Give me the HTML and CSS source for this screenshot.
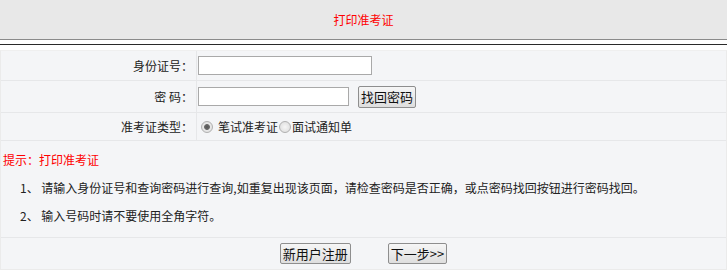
FILE: index.html
```html
<!DOCTYPE html>
<html lang="zh">
<head>
<meta charset="utf-8">
<title>打印准考证</title>
<link rel="stylesheet" href="styles.css">
</head>
<body>
<div class="header"><h1 class="title">打印准考证</h1></div>
<div class="rule"></div>
<div class="panel">
  <div class="row">
    <div class="label">身份证号：</div>
    <div class="field"><input class="txt txt-long" type="text"></div>
  </div>
  <div class="row row-pwd">
    <div class="label">密&nbsp;码：</div>
    <div class="field"><input class="txt txt-short" type="password"><button class="btn btn-find" type="button">找回密码</button></div>
  </div>
  <div class="row row-type">
    <div class="label">准考证类型：</div>
    <div class="field">
      <label class="opt"><input class="radio" type="radio" name="t" checked><span class="opt-text">笔试准考证</span></label><label class="opt opt-2"><input class="radio" type="radio" name="t"><span>面试通知单</span></label>
    </div>
  </div>
  <div class="tips">
    <p class="tip-head">提示：打印准考证</p>
    <p class="tip">1、&nbsp;请输入身份证号和查询密码进行查询,如重复出现该页面，请检查密码是否正确，或点密码找回按钮进行密码找回。</p>
    <p class="tip">2、&nbsp;输入号码时请不要使用全角字符。</p>
  </div>
  <div class="actions">
    <button class="btn" type="button">新用户注册</button>
    <button class="btn" type="button">下一步&gt;&gt;</button>
  </div>
</div>
</body>
</html>
```
FILE: styles.css
```css
html, body { margin: 0; padding: 0; background: #fff; }
body {
  font-family: "Microsoft YaHei", "Noto Sans CJK SC", "DejaVu Sans", sans-serif;
  font-size: 12px;
  color: #222;
  width: 727px;
}
.header {
  height: 39px;
  background: #e8e8e8;
  border-bottom: 1px solid #8a8a8a;
  display: flex;
  align-items: center;
  justify-content: center;
}
.title {
  margin: 0;
  font-size: 12px;
  font-weight: normal;
  color: #f00;
  line-height: 16px;
}
.rule {
  margin-top: 4px;
  height: 0;
  border-top: 1px solid #2a2a2a;
}
.panel {
  margin-top: 5px;
  background: #f4f5f7;
  border: 1px solid #ebebeb;
  border-top: 1px solid #efefef;
}
.row {
  display: grid;
  grid-template-columns: 196px 1fr;
  height: 29px;
  border-bottom: 1px solid #e6e7e9;
}
.row-pwd { height: 31px; }
.row-type { height: 27px; }
.label {
  display: flex;
  align-items: center;
  justify-content: flex-end;
  padding-right: 3px;
  border-right: 1px solid #e6e7e9;
}
.field {
  display: flex;
  align-items: center;
  padding-left: 1px;
}
.txt {
  box-sizing: border-box;
  height: 19px;
  border: 1px solid #a9a9a9;
  background: #fff;
  padding: 0 2px;
  margin: 0;
  font: inherit;
}
.txt-long { width: 174px; }
.txt-short { width: 151px; }
.btn {
  font-family: inherit;
  font-size: 13px;
  color: #111;
  height: 22px;
  padding: 0 2px;
  margin: 0;
  border: 1px solid #8e8e8e;
  border-radius: 2px;
  background: linear-gradient(#f6f6f6, #dedede);
  line-height: 18px;
}
.btn-find { margin-left: 9px; }
.opt { display: inline-flex; align-items: center; color: #222; }
.opt-text { margin-left: 5px; }
.radio {
  appearance: none;
  -webkit-appearance: none;
  width: 12px;
  height: 12px;
  margin: 0 0 0 3px;
  border: 1px solid #b0b0b0;
  border-radius: 50%;
  background: radial-gradient(circle, #f6f6f6, #dadada);
  box-sizing: border-box;
}
.radio:checked {
  background: radial-gradient(circle, #555 0, #6a6a6a 2.5px, #e8e8e8 3.3px, #dcdcdc 100%);
}
.opt-2 .radio { margin-left: 1px; margin-right: 1px; }
.tips { padding: 5px 0 7px; }
.tips p { margin: 0; line-height: 28px; }
.tip-head { color: #f00; padding-left: 2px; }
.tip { padding-left: 19px; }
.actions {
  border-top: 1px solid #e6e7e9;
  height: 31px;
  display: flex;
  align-items: center;
  justify-content: center;
  gap: 37px;
}
.actions .btn { height: 21px; }
```
